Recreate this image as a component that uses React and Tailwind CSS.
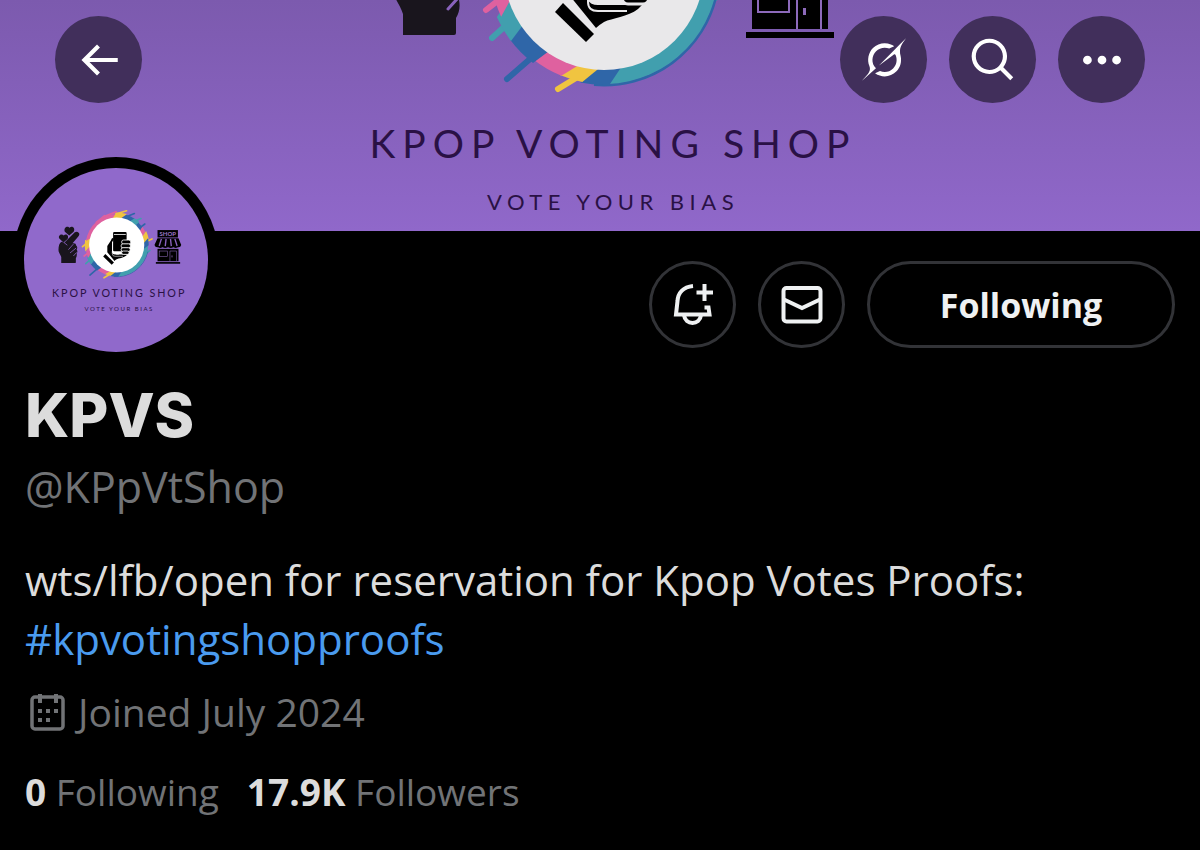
import React from "react";

const CX = 604;
const CY = -30;

function polar(radius, deg) {
  const a = (deg * Math.PI) / 180;
  return `${(CX + radius * Math.cos(a)).toFixed(2)} ${(CY + radius * Math.sin(a)).toFixed(2)}`;
}

/* A ring segment whose two ends are cut along the same diagonal as the brush strokes. */
function segment(from, to, outer) {
  const skew = (deg) => deg + 9 * Math.sin((2 * (135 - deg) * Math.PI) / 180);
  return `M${polar(97, from)}L${polar(outer, skew(from))}A${outer} ${outer} 0 0 1 ${polar(outer, skew(to))}L${polar(97, to)}Z`;
}

const TEAL = "#419fae";
const BLUE = "#2f66a8";
const PINK = "#df619f";
const YELLOW = "#f0c440";

const ring = [
  [TEAL, 8, 80, 114],
  [BLUE, 79, 93, 115],
  [YELLOW, 92, 105, 114],
  [PINK, 104, 125, 114],
  [BLUE, 124, 147, 117],
  [TEAL, 146, 164, 117],
  [PINK, 163, 178, 113],
  [YELLOW, 177, 196, 116],
  [PINK, 195, 262, 112],
  [YELLOW, 261, 280, 118],
  [BLUE, 279, 300, 115],
  [TEAL, 299, 315, 117],
  [BLUE, 314, 330, 113],
  [PINK, 329, 343, 114],
  [YELLOW, 342, 358, 118],
  [BLUE, 357, 369, 116],
];

const streaks = [
  [TEAL, "M514 18L492 38"],
  [BLUE, "M530 59L507 79"],
  [YELLOW, "M576 78L558 89"],
  [PINK, "M504 -4L486 10"],
  [YELLOW, "M500 -40L480 -24"],
  [PINK, "M500 -60L522 -90"],
  [PINK, "M530 -112L560 -136"],
  [PINK, "M556 -132L602 -150"],
  [YELLOW, "M600 -142L640 -154"],
  [BLUE, "M644 -134L668 -144"],
  [TEAL, "M668 -116L692 -126"],
  [BLUE, "M690 -94L706 -106"],
  [YELLOW, "M706 -40L732 -52"],
  [TEAL, "M704 8L724 -10"],
];

function ShopArtwork({ viewBox, className, discColor, withSign }) {
  return (
    <svg viewBox={viewBox} preserveAspectRatio="xMidYMin slice" className={className} role="img" aria-label="Kpop Voting Shop">
      {/* finger heart */}
      <g fill="#19151d">
        <path d="M403 35V14C400 4 393 -2 393 -12C393 -26 396 -38 404 -42L414 -38L452 -76Q463 -82 468 -72Q470 -66 464 -60L444 -36Q458 -38 457 -28Q464 -22 459 -14Q464 -6 459 0Q461 10 456 18V33Q456 35 454 35Z" />
        <path d="M432 -64L416 -78C410 -94 427 -102 433 -92C441 -102 456 -92 448 -78Z" />
        <path d="M411 -39L396 -53C390 -65 405 -74 412 -64C420 -73 433 -63 426 -52Z" />
      </g>
      <g stroke="#8962bd" strokeWidth="3" strokeLinecap="round" fill="none">
        <path d="M414 -38L424 -30M430 -14L446 -32M436 -2L456 -18M448 9L458 -2" />
      </g>

      {/* brush ring */}
      {streaks.map(([color, d]) => (
        <path key={d} d={d} stroke={color} strokeWidth="6" strokeLinecap="round" />
      ))}
      <path d={`M${polar(115, 12)}A115 115 0 0 1 ${polar(115, 95)}`} fill="none" stroke={BLUE} strokeWidth="3" />
      {ring.map(([color, from, to, outer]) => (
        <path key={from} d={segment(from, to, outer)} fill={color} />
      ))}
      <circle cx={CX} cy={CY} r="100" fill={discColor} />

      {/* hand holding a phone */}
      <path d="M555 12L563 3L594 34L586 42Z" />
      <path d="M570 -4L596 28Q599 25 604 22C612 18 628 17 638 9L642 5H598Q587 5 587 -5V-40L594 -52Q588 -60 583 -46L570 -26Z" />
      <rect x="591" y="-77" width="49" height="70" rx="4" />
      <path d="M594 -68H637" stroke={discColor} strokeWidth="3" />
      <g stroke={discColor} strokeWidth="3">
        <rect x="622" y="-48" width="33" height="15" rx="7" />
        <rect x="620" y="-34" width="34" height="15" rx="7" />
        <rect x="620" y="-20" width="33" height="14" rx="7" />
        <rect x="622" y="-8" width="27" height="12" rx="6" />
      </g>
      <path d="M588 -8V2Q588 11 598 11H627" fill="none" stroke={discColor} strokeWidth="2" />
      <rect x="602" y="1" width="10" height="4" rx="1" fill={discColor} />

      {/* shop front */}
      <rect x="752" y="-84" width="74" height="27" />
      {withSign && (
        <text x="789" y="-63" textAnchor="middle" fill="#9a78c8" className="text-[22px] font-bold [font-family:Lato,sans-serif]">
          SHOP
        </text>
      )}
      <path d="M752 -54H828L838 -30Q835 -20 826 -22Q818 -16 810 -22Q800 -16 790 -22Q780 -16 770 -22Q762 -16 754 -22Q744 -20 741 -30Z" />
      <path d="M766 -52L758 -26M783 -52L780 -26M799 -52L802 -26M815 -52L823 -26" stroke="#8962bd" strokeWidth="5" />
      <rect x="752" y="-16" width="76" height="45" />
      <g fill="none" stroke="#8d6abb" strokeWidth="2">
        <rect x="758" y="-8" width="31" height="20" />
        <path d="M797 29V-8H821V29" />
        <path d="M804.500 8V15" strokeWidth="3" />
      </g>
      <rect x="746" y="32" width="88" height="6" />

      {/* wordmark */}
      <g fill="#2a1145" textAnchor="middle">
        <text x="613" y="158" className="text-[39px] tracking-[0.18em] [font-family:Lato,sans-serif]">
          KPOP VOTING SHOP
        </text>
        <text x="613" y="210" className="text-[22px] tracking-[0.25em] [font-family:Lato,sans-serif]">
          VOTE YOUR BIAS
        </text>
      </g>
    </svg>
  );
}

function Icon({ children, className = "size-[50px]", viewBox = "0 0 24 24" }) {
  return (
    <svg viewBox={viewBox} fill="currentColor" className={className} aria-hidden="true">
      {children}
    </svg>
  );
}

function OverlayButton({ label, children }) {
  return (
    <button type="button" aria-label={label} className="flex size-[87px] items-center justify-center rounded-full bg-[#412f5b] text-white">
      {children}
    </button>
  );
}

function OutlineButton({ label, children }) {
  return (
    <button type="button" aria-label={label} className="flex size-[87px] items-center justify-center rounded-full border-[3px] border-[#323337] text-[#eff1f2]">
      {children}
    </button>
  );
}

export default function App() {
  return (
    <main className="min-h-screen bg-black text-[#dcdcdc] [font-family:'Open_Sans',sans-serif]">
      <header className="relative h-[231px] overflow-hidden bg-linear-to-b from-[#7c5aae] to-[#9068ca]">
        <ShopArtwork viewBox="0 0 1200 231" className="h-full w-full" discColor="#e9e8ea" />
        <nav className="absolute inset-x-0 top-4 flex justify-between px-[55px]">
          <OverlayButton label="Back">
            <Icon>
              <path d="M7.414 13l5.043 5.040-1.414 1.420L3.586 12l7.457-7.460 1.414 1.420L7.414 11H21v2H7.414z" />
            </Icon>
          </OverlayButton>
          <div className="flex gap-[22px]">
            <OverlayButton label="Grok">
              <Icon viewBox="0 0 33 32" className="h-[43px] w-[44px]">
                <path d="M12.745 20.540l10.970-8.190c.539-.4 1.307-.244 1.564.38 1.349 3.288.746 7.241-1.938 9.955-2.683 2.714-6.417 3.310-9.830 1.954l-3.728 1.745c5.347 3.697 11.840 2.782 15.898-1.324 3.219-3.255 4.216-7.692 3.284-11.693l.008.009c-1.351-5.878.332-8.227 3.782-13.031L33 0l-4.540 4.590v-.014L12.743 20.544m-2.263 1.987c-3.837-3.707-3.175-9.446.1-12.755 2.420-2.449 6.388-3.448 9.852-1.979l3.720-1.737c-.67-.49-1.530-1.017-2.515-1.387-4.455-1.854-9.789-.931-13.410 2.728-3.483 3.523-4.579 8.940-2.697 13.561 1.405 3.454-.899 5.898-3.220 8.364C1.490 30.200.666 31.074 0 32l10.478-9.466" />
              </Icon>
            </OverlayButton>
            <OverlayButton label="Search">
              <Icon>
                <path d="M10.250 3.750c-3.590 0-6.500 2.910-6.500 6.500s2.910 6.500 6.500 6.500c1.795 0 3.419-.726 4.596-1.904 1.178-1.177 1.904-2.801 1.904-4.596 0-3.590-2.910-6.500-6.500-6.500zm-8.500 6.500c0-4.694 3.806-8.500 8.500-8.500s8.500 3.806 8.500 8.500c0 1.986-.682 3.815-1.824 5.262l4.781 4.781-1.414 1.414-4.781-4.781c-1.447 1.142-3.276 1.824-5.262 1.824-4.694 0-8.500-3.806-8.500-8.500z" />
              </Icon>
            </OverlayButton>
            <OverlayButton label="More">
              <Icon>
                <circle cx="5" cy="12" r="2.100" />
                <circle cx="12" cy="12" r="2.100" />
                <circle cx="19" cy="12" r="2.100" />
              </Icon>
            </OverlayButton>
          </div>
        </nav>
      </header>

      <section className="relative flex items-start justify-between pr-[25px] pl-[13px]">
        <div className="-mt-[74px] size-[206px] overflow-hidden rounded-full bg-black p-[11px]">
          <div className="size-full overflow-hidden rounded-full bg-[#9069cb]">
            <ShopArtwork viewBox="268 -309 667 667" className="size-full" discColor="#ffffff" withSign />
          </div>
        </div>
        <div className="flex gap-[22px] pt-[30px]">
          <OutlineButton label="Notify me">
            <Icon viewBox="0 0 50 50">
              <g fill="none" stroke="currentColor" strokeWidth="4">
                <path d="M25 6C15 7 10 13 9.500 21L8 34.500H41.500L40.500 27.500H36.500" />
                <path d="M16 35C17 45.500 32 45.500 33 35" />
                <path d="M36.500 4V21M28.500 12.500H45" />
              </g>
            </Icon>
          </OutlineButton>
          <OutlineButton label="Message">
            <Icon viewBox="0 0 50 50">
              <g fill="none" stroke="currentColor" strokeWidth="4">
                <rect x="6.500" y="8" width="37" height="33.500" rx="3" />
                <path d="M7 19.500L25 28L43 19.500" />
              </g>
            </Icon>
          </OutlineButton>
          <button type="button" className="h-[87px] w-[308px] rounded-full border-[3px] border-[#323337] text-[34px] leading-[48px] font-bold text-[#eff1f2]">
            Following
          </button>
        </div>
      </section>

      <section className="px-[25px] pt-4">
        <h1 className="text-[60px] leading-[72px] font-extrabold [font-family:Inter,sans-serif]">KPVS</h1>
        <p className="text-[43px] leading-[72px] text-[#717376]">@KPpVtShop</p>
        <p className="mt-[27px] text-[42px] leading-[59px]">
          wts/lfb/open for reservation for Kpop Votes Proofs:
          <br />
          <a href="#kpvotingshopproofs" className="text-[#4a9bef]">#kpvotingshopproofs</a>
        </p>
        <p className="mt-4 flex items-center gap-2 text-[39px] leading-[56px] text-[#717376]">
          <Icon viewBox="0 0 45 45" className="size-[45px]">
            <rect x="7" y="7" width="31" height="32" rx="3" fill="none" stroke="currentColor" strokeWidth="3.500" />
            <path d="M13 4h4v9h-4zM29 4h4v9h-4zM13 19h4v4h-4zM21 19h4v4h-4zM29 19h4v4h-4zM13 28h4v4h-4zM21 28h4v4h-4z" />
          </Icon>
          Joined July 2024
        </p>
        <div className="mt-6 flex gap-7 text-[37px] leading-[56px] text-[#717376]">
          <a href="#following">
            <strong className="font-bold text-[#dcdcdc]">0</strong> Following
          </a>
          <a href="#followers">
            <strong className="font-bold text-[#dcdcdc]">17.9K</strong> Followers
          </a>
        </div>
      </section>
    </main>
  );
}
